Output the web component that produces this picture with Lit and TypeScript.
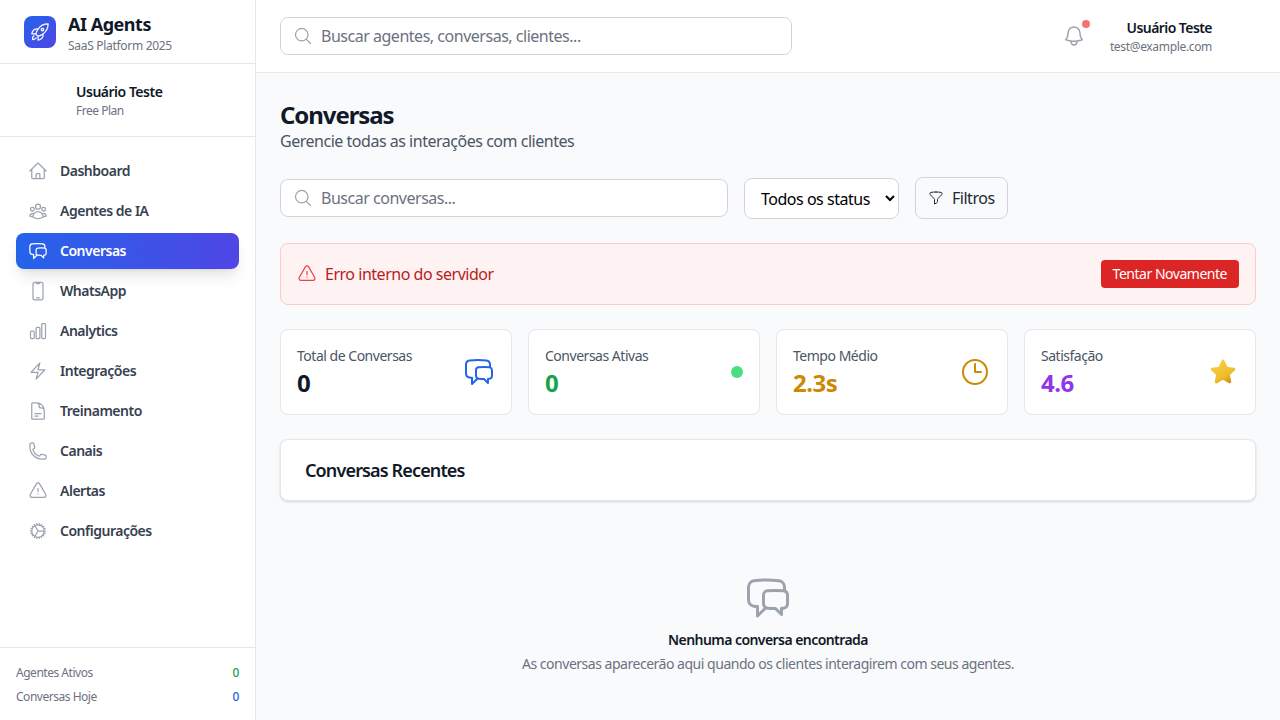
import { LitElement, html, css, svg } from 'lit';
import { customElement } from 'lit/decorators.js';

const ICONS: Record<string, string> = {
  home: 'm2.25 12 8.954-8.955c.44-.439 1.152-.439 1.591 0L21.75 12M4.5 9.75v10.125c0 .621.504 1.125 1.125 1.125H9.75v-4.875c0-.621.504-1.125 1.125-1.125h2.25c.621 0 1.125.504 1.125 1.125V21h4.125c.621 0 1.125-.504 1.125-1.125V9.75M8.25 21h8.25',
  group: 'M18 18.72a9.094 9.094 0 0 0 3.741-.479 3 3 0 0 0-4.682-2.72m.94 3.198.001.031c0 .225-.012.447-.037.666A11.944 11.944 0 0 1 12 21c-2.17 0-4.207-.576-5.963-1.584A6.062 6.062 0 0 1 6 18.719m12 0a5.971 5.971 0 0 0-.941-3.197m0 0A5.995 5.995 0 0 0 12 12.75a5.995 5.995 0 0 0-5.058 2.772m0 0a3 3 0 0 0-4.681 2.72 8.986 8.986 0 0 0 3.74.477m.94-3.197a5.971 5.971 0 0 0-.94 3.197M15 6.75a3 3 0 1 1-6 0 3 3 0 0 1 6 0Zm6 3a2.25 2.25 0 1 1-4.5 0 2.25 2.25 0 0 1 4.5 0Zm-13.5 0a2.25 2.25 0 1 1-4.5 0 2.25 2.25 0 0 1 4.5 0Z',
  chat: 'M20.25 8.511c.884.284 1.5 1.128 1.5 2.097v4.286c0 1.136-.847 2.1-1.98 2.193-.34.027-.68.052-1.02.072v3.091l-3-3c-1.354 0-2.694-.055-4.02-.163a2.115 2.115 0 0 1-.825-.242m9.345-8.334a2.126 2.126 0 0 0-.476-.095 48.64 48.64 0 0 0-8.048 0c-1.131.094-1.976 1.057-1.976 2.192v4.286c0 .837.46 1.58 1.155 1.951m9.345-8.334V6.637c0-1.621-1.152-3.026-2.76-3.235A48.455 48.455 0 0 0 11.25 3c-2.115 0-4.198.137-6.24.402-1.608.209-2.76 1.614-2.76 3.235v6.226c0 1.621 1.152 3.026 2.76 3.235.577.075 1.157.14 1.74.194V21l4.155-4.155',
  mobile: 'M10.5 1.5H8.25A2.25 2.25 0 0 0 6 3.75v16.5a2.25 2.25 0 0 0 2.25 2.25h7.5A2.25 2.25 0 0 0 18 20.25V3.75a2.25 2.25 0 0 0-2.25-2.25H13.5m-3 0V3h3V1.5m-3 0h3m-3 18.75h3',
  chart: 'M3 13.125C3 12.504 3.504 12 4.125 12h2.25c.621 0 1.125.504 1.125 1.125v6.75C7.5 20.496 6.996 21 6.375 21h-2.25A1.125 1.125 0 0 1 3 19.875v-6.75ZM9.75 8.625c0-.621.504-1.125 1.125-1.125h2.25c.621 0 1.125.504 1.125 1.125v11.25c0 .621-.504 1.125-1.125 1.125h-2.25a1.125 1.125 0 0 1-1.125-1.125V8.625ZM16.5 4.125c0-.621.504-1.125 1.125-1.125h2.25C20.496 3 21 3.504 21 4.125v15.75c0 .621-.504 1.125-1.125 1.125h-2.25a1.125 1.125 0 0 1-1.125-1.125V4.125Z',
  bolt: 'm3.75 13.5 10.5-11.25L12 10.5h8.25L9.75 21.75 12 13.5H3.75Z',
  doc: 'M19.5 14.25v-2.625a3.375 3.375 0 0 0-3.375-3.375h-1.5A1.125 1.125 0 0 1 13.5 7.125v-1.5a3.375 3.375 0 0 0-3.375-3.375H8.25m0 12.75h7.5m-7.5 3H12M10.5 2.25H5.625c-.621 0-1.125.504-1.125 1.125v17.25c0 .621.504 1.125 1.125 1.125h12.75c.621 0 1.125-.504 1.125-1.125V11.25a9 9 0 0 0-9-9Z',
  phone: 'M2.25 6.75c0 8.284 6.716 15 15 15h2.25a2.25 2.25 0 0 0 2.25-2.25v-1.372c0-.516-.351-.966-.852-1.091l-4.423-1.106c-.44-.11-.902.055-1.173.417l-.97 1.293c-.282.376-.769.542-1.21.38a12.035 12.035 0 0 1-7.143-7.143c-.162-.441.004-.928.38-1.21l1.293-.97c.363-.271.527-.734.417-1.173L6.963 3.102a1.125 1.125 0 0 0-1.091-.852H4.5A2.25 2.25 0 0 0 2.25 4.5v2.25Z',
  alert: 'M12 9v3.75m-9.303 3.376c-.866 1.5.217 3.374 1.948 3.374h14.71c1.73 0 2.813-1.874 1.948-3.374L13.949 3.378c-.866-1.5-3.032-1.5-3.898 0L2.697 16.126ZM12 15.75h.007v.008H12v-.008Z',
  cog: 'M4.5 12a7.5 7.5 0 0 0 15 0m-15 0a7.5 7.5 0 1 1 15 0m-15 0H3m16.5 0H21m-1.5 0H12m-8.457 3.077 1.41-.513m14.095-5.13 1.41-.513M5.106 17.785l1.15-.964m11.49-9.642 1.149-.964M7.501 19.795l.75-1.3m7.5-12.99.75-1.3m-6.063 16.658.26-1.477m2.605-14.772.26-1.477m0 17.726-.26-1.477M10.698 4.614l-.26-1.477M16.5 19.794l-.75-1.299M7.5 4.205 12 12m6.894 5.785-1.149-.964M6.256 7.178l-1.15-.964m15.352 8.864-1.41-.513M4.954 9.435l-1.41-.514M12.002 12l-3.75 6.495',
  search: 'm21 21-5.197-5.197m0 0A7.5 7.5 0 1 0 5.196 5.196a7.5 7.5 0 0 0 10.607 10.607Z',
  bell: 'M14.857 17.082a23.848 23.848 0 0 0 5.454-1.31A8.967 8.967 0 0 1 18 9.75V9A6 6 0 0 0 6 9v.75a8.967 8.967 0 0 1-2.312 6.022c1.733.64 3.56 1.085 5.455 1.31m5.714 0a24.255 24.255 0 0 1-5.714 0m5.714 0a3 3 0 1 1-5.714 0',
  funnel: 'M12 3c2.755 0 5.455.232 8.083.678.533.09.917.556.917 1.096v1.044a2.25 2.25 0 0 1-.659 1.591l-5.432 5.432a2.25 2.25 0 0 0-.659 1.591v2.927a2.25 2.25 0 0 1-1.244 2.013L9.75 21v-6.568a2.25 2.25 0 0 0-.659-1.591L3.659 7.409A2.25 2.25 0 0 1 3 5.818V4.774c0-.54.384-1.006.917-1.096A48.32 48.32 0 0 1 12 3Z',
  clock: 'M12 6v6h4.5m4.5 0a9 9 0 1 1-18 0 9 9 0 0 1 18 0Z',
  rocket: 'M15.59 14.37a6 6 0 0 1-5.84 7.38v-4.8m5.84-2.58a14.98 14.98 0 0 0 6.16-12.12A14.98 14.98 0 0 0 9.631 8.41m5.96 5.96a14.926 14.926 0 0 1-5.841 2.58m-.119-8.54a6 6 0 0 0-7.381 5.84h4.8m2.581-5.84a14.927 14.927 0 0 0-2.58 5.84m2.699 2.7c-.103.021-.207.041-.311.06a15.09 15.09 0 0 1-2.448-2.448 14.9 14.9 0 0 1 .06-.312m-2.24 2.39a4.493 4.493 0 0 0-1.757 4.306 4.493 4.493 0 0 0 4.306-1.758M16.5 9a1.5 1.5 0 1 1-3 0 1.5 1.5 0 0 1 3 0Z',
};

const NAV = [
  { label: 'Dashboard', icon: 'home' },
  { label: 'Agentes de IA', icon: 'group' },
  { label: 'Conversas', icon: 'chat', active: true },
  { label: 'WhatsApp', icon: 'mobile' },
  { label: 'Analytics', icon: 'chart' },
  { label: 'Integrações', icon: 'bolt' },
  { label: 'Treinamento', icon: 'doc' },
  { label: 'Canais', icon: 'phone' },
  { label: 'Alertas', icon: 'alert' },
  { label: 'Configurações', icon: 'cog' },
];

const icon = (name: string, size: number) => html`
  <svg class="icon" width=${size} height=${size} viewBox="0 0 24 24" fill="none" stroke="currentColor"
    stroke-width="1.5" stroke-linecap="round" stroke-linejoin="round">${svg`<path d=${ICONS[name]}></path>`}</svg>
`;

const star = html`
  <svg class="icon" width="32" height="32" viewBox="0 0 28 28">
    <defs>
      <linearGradient id="star" x1="0.2" y1="0" x2="0.8" y2="1">
        <stop offset="0" stop-color="#f6d040"></stop>
        <stop offset="0.7" stop-color="#eebc2c"></stop>
        <stop offset="1" stop-color="#cf9420"></stop>
      </linearGradient>
    </defs>
    <path d="M14 4.5l2.9 6.2 6.6.8-4.9 4.5 1.3 6.6-5.9-3.3-5.9 3.3 1.3-6.6-4.9-4.5 6.6-.8z"
      fill="url(#star)" stroke="url(#star)" stroke-width="2.6" stroke-linejoin="round"></path>
  </svg>
`;

@customElement('app-root')
export class AppRoot extends LitElement {
  static styles = css`
    :host {
      display: block;
      height: 720px;
      overflow: hidden;
      font-family: 'Noto Sans', 'Open Sans', sans-serif;
      letter-spacing: -0.03em;
      color: #111827;
    }

    .layout {
      display: flex;
      height: 720px;
    }

    .icon {
      display: block;
      flex: none;
    }

    /* sidebar */
    .sidebar {
      width: 256px;
      flex: none;
      display: flex;
      flex-direction: column;
      background: #fff;
      border-right: 1px solid #e5e7eb;
      box-sizing: border-box;
    }

    .brand {
      height: 64px;
      box-sizing: border-box;
      display: flex;
      align-items: center;
      gap: 12px;
      padding: 0 24px;
      border-bottom: 1px solid #e5e7eb;
    }

    .logo {
      width: 32px;
      height: 32px;
      border-radius: 8px;
      display: flex;
      align-items: center;
      justify-content: center;
      color: #fff;
      background: linear-gradient(135deg, #2563eb, #4f46e5);
    }

    .brand-name {
      font-size: 18px;
      line-height: 28px;
      font-weight: 700;
    }

    .brand-sub {
      font-size: 12px;
      line-height: 16px;
      letter-spacing: -0.025em;
      color: #6b7280;
    }

    .profile {
      height: 73px;
      box-sizing: border-box;
      display: flex;
      align-items: center;
      gap: 12px;
      padding: 0 24px;
      border-bottom: 1px solid #e5e7eb;
    }

    .avatar-lg {
      width: 40px;
      height: 40px;
    }

    .profile-name {
      font-size: 14px;
      line-height: 20px;
      font-weight: 600;
      letter-spacing: -0.035em;
    }

    .profile-plan {
      margin-top: 1px;
      font-size: 12px;
      line-height: 16px;
      color: #6b7280;
    }

    .nav {
      flex: 1;
      display: flex;
      flex-direction: column;
      gap: 4px;
      padding: 16px;
    }

    .nav-item {
      height: 36px;
      display: flex;
      align-items: center;
      gap: 12px;
      padding: 0 12px;
      border-radius: 8px;
      font-size: 14px;
      font-weight: 600;
      letter-spacing: -0.035em;
      color: #374151;
    }

    .nav-item span {
      padding-bottom: 2px;
    }

    .nav-item .icon {
      color: #9ca3af;
    }

    .nav-item.active {
      color: #fff;
      background: linear-gradient(to right, #2563eb, #4f46e5);
      box-shadow: 0 10px 15px -3px rgba(0, 0, 0, 0.1), 0 4px 6px -4px rgba(0, 0, 0, 0.1);
    }

    .nav-item.active .icon {
      color: #fff;
    }

    .side-foot {
      border-top: 1px solid #e5e7eb;
      padding: 17px 16px 15px;
      display: flex;
      flex-direction: column;
      gap: 8px;
    }

    .foot-row {
      display: flex;
      justify-content: space-between;
      font-size: 12px;
      line-height: 16px;
      color: #6b7280;
    }

    .foot-row b {
      font-weight: 500;
    }

    /* top bar */
    .content {
      flex: 1;
      min-width: 0;
      display: flex;
      flex-direction: column;
      background: #f9fafb;
    }

    .topbar {
      height: 73px;
      box-sizing: border-box;
      flex: none;
      display: flex;
      align-items: center;
      justify-content: space-between;
      padding: 0 24px;
      background: #fff;
      border-bottom: 1px solid #e5e7eb;
    }

    .search {
      height: 38px;
      box-sizing: border-box;
      display: flex;
      align-items: center;
      gap: 8px;
      padding: 0 12px;
      background: #fff;
      border: 1px solid #d1d5db;
      border-radius: 8px;
      color: #9ca3af;
    }

    .search input {
      flex: 1;
      min-width: 0;
      border: 0;
      outline: 0;
      padding: 0;
      background: transparent;
      font: inherit;
      font-size: 16px;
      letter-spacing: inherit;
      color: #111827;
    }

    .search input::placeholder {
      color: #6b7280;
      opacity: 1;
    }

    .top-search {
      width: 512px;
    }

    .top-right {
      display: flex;
      align-items: center;
      gap: 16px;
    }

    .bell {
      position: relative;
      padding: 8px;
      color: #9ca3af;
    }

    .bell-dot {
      position: absolute;
      top: 4px;
      right: 4px;
      width: 8px;
      height: 8px;
      border-radius: 50%;
      background: #f87171;
    }

    .account {
      display: flex;
      align-items: center;
      gap: 12px;
      text-align: right;
    }

    .avatar-sm {
      width: 32px;
      height: 32px;
    }

    .account-name {
      font-size: 14px;
      line-height: 20px;
      font-weight: 600;
      letter-spacing: -0.04em;
    }

    .account-mail {
      margin-top: 1px;
      font-size: 12px;
      line-height: 16px;
      letter-spacing: -0.028em;
      color: #6b7280;
    }

    /* page */
    .page {
      flex: 1;
      padding: 24px;
      display: flex;
      flex-direction: column;
      gap: 24px;
    }

    h1 {
      margin: 0;
      height: 32px;
      font-size: 24px;
      line-height: 36px;
      font-weight: 700;
      letter-spacing: -0.045em;
    }

    .subtitle {
      font-size: 16px;
      line-height: 24px;
      color: #4b5563;
    }

    .toolbar {
      display: flex;
      align-items: center;
      gap: 16px;
    }

    .toolbar .search {
      width: 448px;
    }

    select {
      height: 41px;
      width: 155px;
      padding: 2px 8px 0 12px;
      font: inherit;
      font-size: 16px;
      letter-spacing: inherit;
      color: #000;
      background: #fff;
      border: 1px solid #d1d5db;
      border-radius: 8px;
    }

    .filter {
      height: 42px;
      box-sizing: border-box;
      display: flex;
      align-items: center;
      gap: 8px;
      padding: 0 12px;
      border: 1px solid #d1d5db;
      border-radius: 8px;
      font-size: 16px;
      color: #1f2937;
    }

    .error {
      height: 62px;
      box-sizing: border-box;
      display: flex;
      align-items: center;
      justify-content: space-between;
      padding: 0 16px;
      background: #fef2f2;
      border: 1px solid #fecaca;
      border-radius: 8px;
    }

    .error-msg {
      display: flex;
      align-items: center;
      gap: 8px;
      font-size: 16px;
      color: #b91c1c;
    }

    .error-msg .icon {
      color: #ef4444;
    }

    .retry {
      height: 28px;
      box-sizing: border-box;
      display: flex;
      align-items: center;
      padding: 0 12px 2px;
      border-radius: 4px;
      background: #dc2626;
      color: #fff;
      font-size: 14px;
    }

    .stats {
      display: grid;
      grid-template-columns: repeat(4, 1fr);
      gap: 16px;
    }

    .stat {
      display: flex;
      align-items: center;
      justify-content: space-between;
      padding: 16px;
      background: #fff;
      border: 1px solid #e5e7eb;
      border-radius: 8px;
    }

    .stat-label {
      font-size: 14px;
      line-height: 20px;
      color: #4b5563;
    }

    .stat-value {
      height: 32px;
      font-size: 24px;
      line-height: 34px;
      font-weight: 700;
    }

    .dot {
      width: 12px;
      height: 12px;
      border-radius: 50%;
      background: #4ade80;
    }

    .recent {
      height: 62px;
      box-sizing: border-box;
      display: flex;
      align-items: center;
      padding: 0 24px;
      background: #fff;
      border: 1px solid #e5e7eb;
      border-radius: 8px;
      box-shadow: 0 1px 3px rgba(0, 0, 0, 0.1), 0 1px 2px rgba(0, 0, 0, 0.06);
      font-size: 18px;
      font-weight: 600;
      letter-spacing: -0.048em;
    }

    .empty {
      display: flex;
      flex-direction: column;
      align-items: center;
      padding-top: 49px;
      font-size: 14px;
      line-height: 20px;
      color: #6b7280;
    }

    .empty .icon {
      color: #9ca3af;
    }

    .empty-title {
      margin-top: 8px;
      margin-bottom: 4px;
      font-weight: 600;
      letter-spacing: -0.04em;
      color: #111827;
    }
  `;

  render() {
    return html`
      <div class="layout">
        <aside class="sidebar">
          <div class="brand">
            <div class="logo">${icon('rocket', 20)}</div>
            <div>
              <div class="brand-name">AI Agents</div>
              <div class="brand-sub">SaaS Platform 2025</div>
            </div>
          </div>
          <div class="profile">
            <div class="avatar-lg"></div>
            <div>
              <div class="profile-name">Usuário Teste</div>
              <div class="profile-plan">Free Plan</div>
            </div>
          </div>
          <nav class="nav">
            ${NAV.map(
              (item) => html`
                <div class="nav-item ${item.active ? 'active' : ''}">${icon(item.icon, 20)}<span>${item.label}</span></div>
              `
            )}
          </nav>
          <div class="side-foot">
            <div class="foot-row"><span>Agentes Ativos</span><b style="color:#16a34a">0</b></div>
            <div class="foot-row"><span>Conversas Hoje</span><b style="color:#2563eb">0</b></div>
          </div>
        </aside>
        <div class="content">
          <header class="topbar">
            <label class="search top-search">
              ${icon('search', 20)}
              <input placeholder="Buscar agentes, conversas, clientes..." />
            </label>
            <div class="top-right">
              <div class="bell">${icon('bell', 24)}<span class="bell-dot"></span></div>
              <div class="account">
                <div>
                  <div class="account-name">Usuário Teste</div>
                  <div class="account-mail">test@example.com</div>
                </div>
                <div class="avatar-sm"></div>
              </div>
            </div>
          </header>
          <main class="page">
            <div>
              <h1>Conversas</h1>
              <div class="subtitle">Gerencie todas as interações com clientes</div>
            </div>
            <div class="toolbar">
              <label class="search">
                ${icon('search', 20)}
                <input placeholder="Buscar conversas..." />
              </label>
              <select><option>Todos os status</option></select>
              <div class="filter">${icon('funnel', 16)}<span>Filtros</span></div>
            </div>
            <div class="error">
              <div class="error-msg">${icon('alert', 20)}<span>Erro interno do servidor</span></div>
              <div class="retry">Tentar Novamente</div>
            </div>
            <div class="stats">
              <div class="stat">
                <div>
                  <div class="stat-label">Total de Conversas</div>
                  <div class="stat-value">0</div>
                </div>
                <span style="color:#2563eb">${icon('chat', 32)}</span>
              </div>
              <div class="stat">
                <div>
                  <div class="stat-label">Conversas Ativas</div>
                  <div class="stat-value" style="color:#16a34a">0</div>
                </div>
                <div class="dot"></div>
              </div>
              <div class="stat">
                <div>
                  <div class="stat-label">Tempo Médio</div>
                  <div class="stat-value" style="color:#ca8a04">2.3s</div>
                </div>
                <span style="color:#ca8a04">${icon('clock', 32)}</span>
              </div>
              <div class="stat">
                <div>
                  <div class="stat-label">Satisfação</div>
                  <div class="stat-value" style="color:#9333ea">4.6</div>
                </div>
                ${star}
              </div>
            </div>
            <div class="recent">Conversas Recentes</div>
            <div class="empty">
              ${icon('chat', 48)}
              <div class="empty-title">Nenhuma conversa encontrada</div>
              <div>As conversas aparecerão aqui quando os clientes interagirem com seus agentes.</div>
            </div>
          </main>
        </div>
      </div>
    `;
  }
}
